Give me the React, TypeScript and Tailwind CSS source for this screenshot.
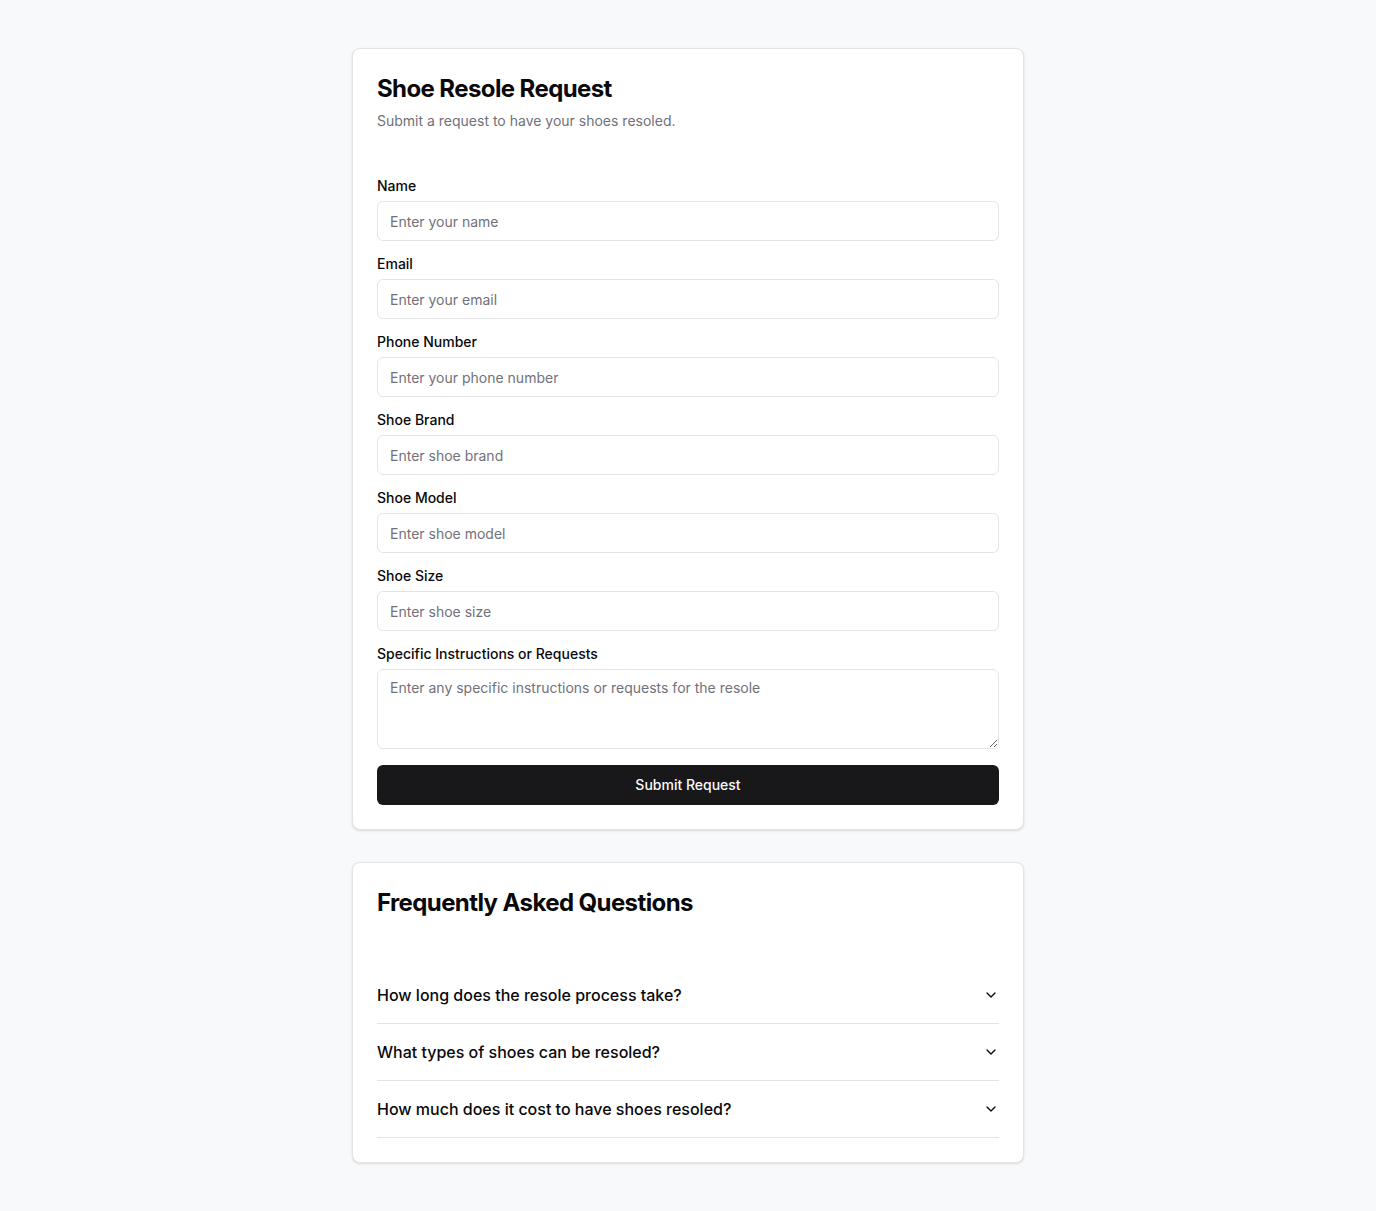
import { ChevronDown } from "lucide-react";

const fields = [
  { id: "name", label: "Name", placeholder: "Enter your name", type: "text" },
  { id: "email", label: "Email", placeholder: "Enter your email", type: "email" },
  { id: "phone", label: "Phone Number", placeholder: "Enter your phone number", type: "tel" },
  { id: "brand", label: "Shoe Brand", placeholder: "Enter shoe brand", type: "text" },
  { id: "model", label: "Shoe Model", placeholder: "Enter shoe model", type: "text" },
  { id: "size", label: "Shoe Size", placeholder: "Enter shoe size", type: "text" },
];

const faqs = [
  "How long does the resole process take?",
  "What types of shoes can be resoled?",
  "How much does it cost to have shoes resoled?",
];

export default function App() {
  return (
    <div className="min-h-screen bg-[#f8f9fb] py-12 font-['Inter',sans-serif] text-[#09090b]">
      <div className="mx-auto max-w-2xl space-y-8">
        {/* Request form */}
        <div className="rounded-lg border border-[#e4e4e7] bg-white shadow-sm">
          <div className="flex flex-col gap-1.5 p-6">
            <h1 className="text-2xl font-bold tracking-tight">Shoe Resole Request</h1>
            <p className="text-sm text-[#71717a]">Submit a request to have your shoes resoled.</p>
          </div>
          <form className="flex flex-col gap-4 p-6" onSubmit={(e) => e.preventDefault()}>
            {fields.map((f) => (
              <div key={f.id} className="flex flex-col gap-2">
                <label htmlFor={f.id} className="text-sm font-medium leading-none">
                  {f.label}
                </label>
                <input
                  id={f.id}
                  type={f.type}
                  placeholder={f.placeholder}
                  className="h-10 w-full rounded-md border border-[#e4e4e7] bg-white px-3 py-2 text-sm placeholder:text-[#71717a] focus:outline-none"
                />
              </div>
            ))}
            <div className="flex flex-col gap-2">
              <label htmlFor="notes" className="text-sm font-medium leading-none">
                Specific Instructions or Requests
              </label>
              <textarea
                id="notes"
                placeholder="Enter any specific instructions or requests for the resole"
                className="min-h-[80px] h-20 w-full rounded-md border border-[#e4e4e7] bg-white px-3 py-2 text-sm placeholder:text-[#71717a] focus:outline-none"
              />
            </div>
            <button
              type="submit"
              className="h-10 w-full rounded-md bg-[#18181b] text-sm font-medium text-[#fafafa]"
            >
              Submit Request
            </button>
          </form>
        </div>

        {/* FAQ */}
        <div className="rounded-lg border border-[#e4e4e7] bg-white shadow-sm">
          <div className="p-6">
            <h2 className="text-2xl font-bold tracking-tight">Frequently Asked Questions</h2>
          </div>
          <div className="p-6">
            {faqs.map((q) => (
              <div key={q} className="border-b border-[#e4e4e7]">
                <button className="flex w-full items-center justify-between py-4 text-left text-base font-medium">
                  {q}
                  <ChevronDown className="h-4 w-4 shrink-0" />
                </button>
              </div>
            ))}
          </div>
        </div>
      </div>
    </div>
  );
}
